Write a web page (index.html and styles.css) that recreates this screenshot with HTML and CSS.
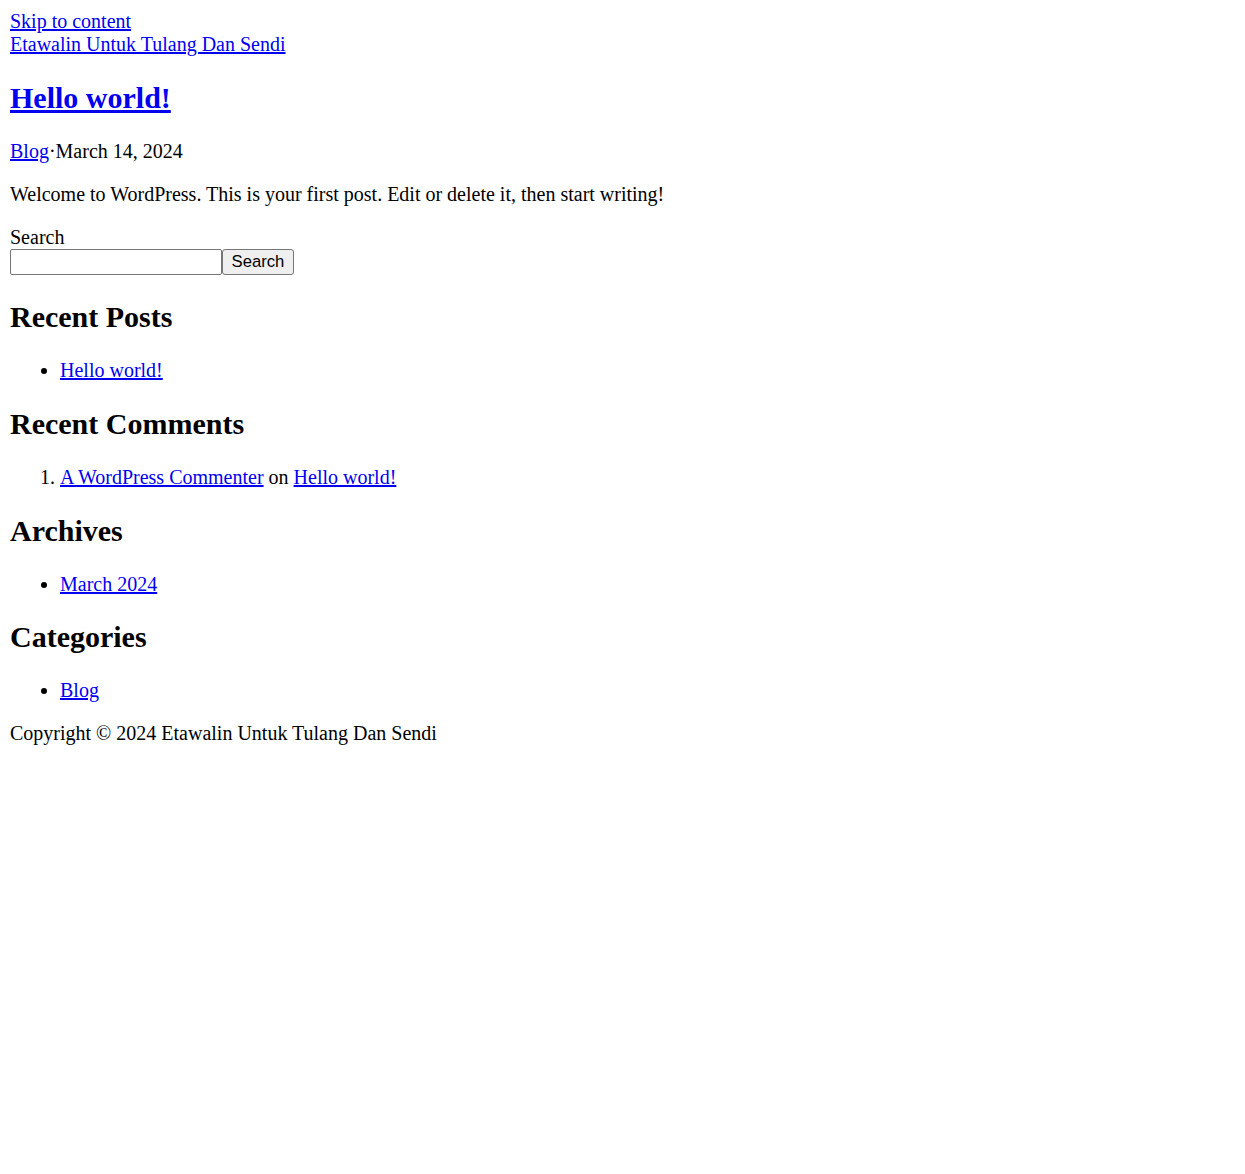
FILE: index.html
```html
<!DOCTYPE html>
<html lang="en">
<head>
<meta charset="utf-8">
<title>Etawalin Untuk Tulang Dan Sendi</title>
<link rel="stylesheet" href="styles.css">
</head>
<body class="page">
<a class="skip-link" href="#content">Skip to content</a>
<header class="site-header">
  <a class="site-title" href="#">Etawalin Untuk Tulang Dan Sendi</a>
</header>
<main id="content" class="site-main">
  <article class="post">
    <h2 class="entry-title"><a href="#">Hello world!</a></h2>
    <p class="entry-meta"><a href="#">Blog</a>·March 14, 2024</p>
    <p class="entry-content">Welcome to WordPress. This is your first post. Edit or delete it, then start writing!</p>
  </article>
  <aside class="sidebar">
    <form class="search-form">
      <label class="search-label" for="s">Search</label>
      <div class="search-row"><input id="s" class="search-input" type="text"><button class="search-button" type="button">Search</button></div>
    </form>
    <h2 class="widget-title">Recent Posts</h2>
    <ul class="widget-list">
      <li><a href="#">Hello world!</a></li>
    </ul>
    <h2 class="widget-title">Recent Comments</h2>
    <ol class="widget-list">
      <li><a href="#">A WordPress Commenter</a> on <a href="#">Hello world!</a></li>
    </ol>
    <h2 class="widget-title">Archives</h2>
    <ul class="widget-list">
      <li><a href="#">March 2024</a></li>
    </ul>
    <h2 class="widget-title">Categories</h2>
    <ul class="widget-list">
      <li><a href="#">Blog</a></li>
    </ul>
  </aside>
</main>
<footer class="site-footer">
  <p class="copyright">Copyright © 2024 Etawalin Untuk Tulang Dan Sendi</p>
</footer>
</body>
</html>
```

FILE: styles.css
```css
html {
  background: #ffffff;
}
.page {
  margin: 10px;
  font-family: "Liberation Serif", "Times New Roman", serif;
  font-size: 20px;
  color: #000000;
}
a {
  color: #0000ee;
}
.skip-link,
.site-title {
  display: block;
  width: max-content;
}
.entry-title,
.widget-title {
  font-size: 30px;
  font-weight: bold;
  margin: 24.95px 0;
}
.entry-meta,
.entry-content,
.copyright {
  margin: 20px 0;
}
.search-form {
  margin: 0;
}
.search-label {
  display: block;
}
.search-row {
  display: flex;
  height: 26px;
}
.search-input {
  box-sizing: border-box;
  width: 212px;
  height: 26px;
  margin: 0;
  padding: 1px 2px;
  border: 1px solid #767676;
  border-radius: 2px;
  background: #ffffff;
  font-family: "Liberation Sans", Arial, sans-serif;
  font-size: 16.67px;
}
.search-button {
  box-sizing: border-box;
  width: 72px;
  height: 26px;
  margin: 0;
  padding: 0 8px;
  border: 1px solid #767676;
  border-radius: 3px;
  background: #efefef;
  color: #000000;
  font-family: "Liberation Sans", Arial, sans-serif;
  font-size: 16.67px;
}
.widget-list {
  margin: 20px 0;
  padding-left: 50px;
}
```
